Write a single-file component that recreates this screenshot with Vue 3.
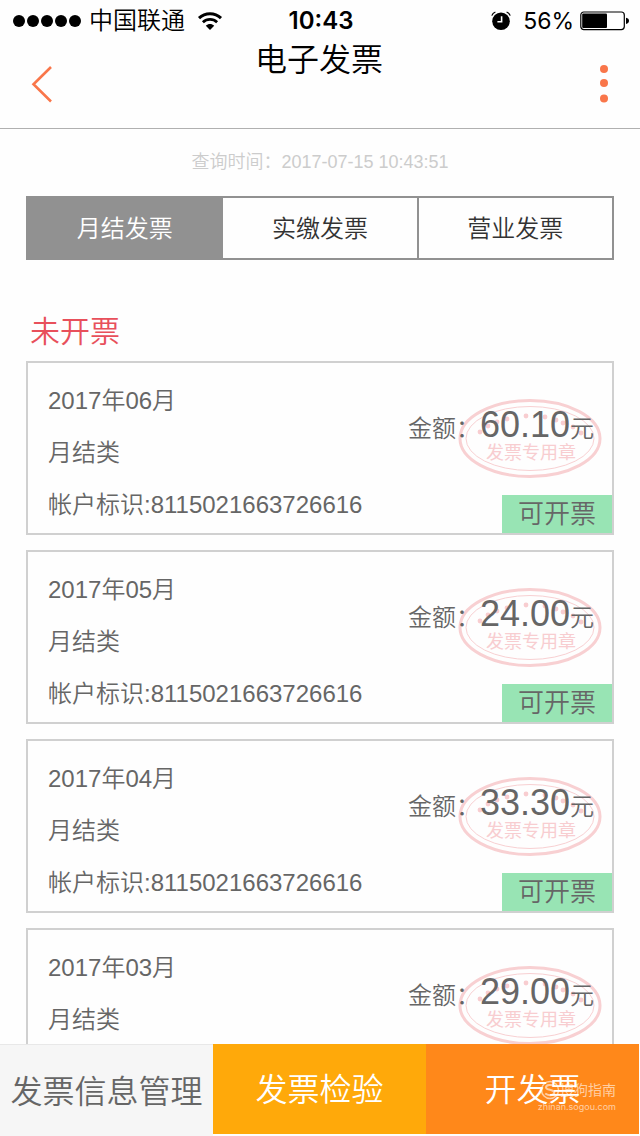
<template>
  <div class="page">
    <div class="status-bar">
      <div class="status-left">
        <div class="signal">
          <i v-for="n in 5" :key="n" class="signal-dot"></i>
        </div>
        <span class="carrier">中国联通</span>
        <svg class="wifi" width="26" height="20" viewBox="0 0 26 20">
          <path d="M2 7.2C8.2 1.3 17.8 1.3 24 7.2" fill="none" stroke="#000" stroke-width="3" />
          <path d="M5.9 11.3C10 7.5 16 7.5 20.1 11.3" fill="none" stroke="#000" stroke-width="2.8" />
          <path d="M13 19L8.8 14.7C11.2 12.5 14.8 12.5 17.2 14.7Z" fill="#000" />
        </svg>
      </div>
      <span class="clock">10:43</span>
      <div class="status-right">
        <svg width="20" height="20" viewBox="0 0 20 20">
          <circle cx="10" cy="10.2" r="8.8" fill="#000" />
          <path d="M0.8 4.6A6 6 0 0 1 4.4 1M19.2 4.6A6 6 0 0 0 15.6 1" fill="none" stroke="#000" stroke-width="1.3" />
          <path d="M10.6 5.2V10.8H6.4" fill="none" stroke="#fff" stroke-width="1.6" />
        </svg>
        <span class="percent">56%</span>
        <svg class="battery" width="49" height="20" viewBox="0 0 49 20">
          <rect x="0.8" y="1" width="43.5" height="17.6" rx="3" fill="#fff" stroke="#000" stroke-width="1.2" />
          <rect x="2.2" y="2.6" width="24.8" height="14.4" rx="1" fill="#000" />
          <path d="M46 6.7Q49 7.3 49 9.8T46 12.9Z" fill="#000" />
        </svg>
      </div>
    </div>

    <header class="header">
      <button class="icon-btn" type="button" aria-label="返回">
        <svg width="24" height="40" viewBox="0 0 24 40">
          <path d="M21 2L3.5 19.2L21 36.5" fill="none" stroke="#f9764a" stroke-width="2.6" />
        </svg>
      </button>
      <h1 class="title">电子发票</h1>
      <button class="icon-btn menu-btn" type="button" aria-label="更多">
        <svg width="8" height="40" viewBox="0 0 8 40">
          <circle cx="4" cy="4" r="4" fill="#f9764a" />
          <circle cx="4" cy="18" r="4" fill="#f9764a" />
          <circle cx="4" cy="33.5" r="4" fill="#f9764a" />
        </svg>
      </button>
    </header>

    <main class="content">
      <p class="query-time">查询时间：2017-07-15 10:43:51</p>

      <div class="tabs">
        <button
          v-for="(tab, index) in tabs"
          :key="tab"
          type="button"
          class="tab"
          :class="{ active: index === activeTab }"
          @click="activeTab = index"
        >
          {{ tab }}
        </button>
      </div>

      <h2 class="section-title">未开票</h2>

      <ul class="invoice-list">
        <li v-for="item in invoices" :key="item.month" class="invoice">
          <div class="info">
            <p>{{ item.month }}</p>
            <p>月结类</p>
            <p>帐户标识:8115021663726616</p>
          </div>
          <div class="side">
            <div class="amount">
              <svg class="stamp" width="144" height="80" viewBox="0 0 144 80">
                <ellipse cx="72" cy="40.5" rx="70" ry="38" fill="none" stroke="#f8d0d2" stroke-width="3" />
                <ellipse cx="72" cy="40.5" rx="64" ry="32" fill="none" stroke="#f8d0d2" stroke-width="1" />
                <circle v-for="(dot, i) in stampDots" :key="i" :cx="dot[0]" :cy="dot[1]" r="2.4" fill="#f8cdd0" />
                <text x="73" y="61" text-anchor="middle" class="stamp-text">发票专用章</text>
              </svg>
              <span class="amount-text">金额：<span class="amount-value">{{ item.amount }}</span>元</span>
            </div>
            <span class="badge">可开票</span>
          </div>
        </li>
      </ul>
    </main>

    <footer class="footer">
      <button type="button" class="action manage">发票信息管理</button>
      <button type="button" class="action check">发票检验</button>
      <button type="button" class="action issue">开发票</button>
      <div class="watermark">
        <div class="watermark-name">
          <svg width="20" height="20" viewBox="0 0 20 20">
            <circle cx="10" cy="10" r="8.5" fill="none" stroke="currentColor" stroke-width="1.5" />
            <path d="M14.5 6.2C12 4.3 6 4.6 6 7.4C6 10.4 14.3 9.2 14.3 12.6C14.3 15.8 8 15.9 5.2 13.6" fill="none" stroke="currentColor" stroke-width="2" />
          </svg>
          <span>搜狗指南</span>
        </div>
        <div class="watermark-url">zhinan.sogou.com</div>
      </div>
    </footer>
  </div>
</template>

<script setup>
import { ref } from 'vue'

const tabs = ['月结发票', '实缴发票', '营业发票']
const activeTab = ref(0)

const invoices = [
  { month: '2017年06月', amount: '60.10' },
  { month: '2017年05月', amount: '24.00' },
  { month: '2017年04月', amount: '33.30' },
  { month: '2017年03月', amount: '29.00' }
]

// 印章上方的一圈圆点
const stampDots = [
  [22, 34],
  [30, 28],
  [39, 24],
  [49, 21],
  [68, 18],
  [87, 19],
  [98, 22],
  [105, 25],
  [115, 29],
  [123, 35]
]
</script>

<style>
body {
  margin: 0;
  background: #fff;
}
</style>

<style scoped>
.page {
  display: flex;
  flex-direction: column;
  height: 100vh;
  overflow: hidden;
  background: #fefefe;
  color: #666;
  font-family: 'Liberation Sans', 'Noto Sans CJK SC', sans-serif;
  font-size: 24px;
  font-weight: 350;
}

p,
h1,
h2,
ul {
  margin: 0;
  padding: 0;
  font-weight: 350;
}

button {
  padding: 0;
  border: none;
  border-radius: 0;
  background: none;
  color: inherit;
  font: inherit;
  cursor: pointer;
}

svg {
  display: block;
}

.status-bar {
  display: grid;
  grid-template-columns: 1fr auto 1fr;
  align-items: center;
  flex: none;
  height: 42px;
  padding: 0 11px 0 13px;
  color: #000;
  font-family: Inter, 'Noto Sans CJK SC', sans-serif;
  line-height: 42px;
}

.status-left,
.status-right {
  display: flex;
  align-items: center;
}

.status-right {
  justify-content: flex-end;
}

.signal {
  display: flex;
  gap: 2px;
  margin-right: 8px;
}

.signal-dot {
  width: 12px;
  height: 12px;
  border-radius: 50%;
  background: #000;
}

.wifi {
  margin-left: 12px;
}

.clock {
  font-weight: 600;
}

.percent {
  margin: 0 6px 0 12px;
  font-size: 23px;
  font-weight: 400;
}

.header {
  display: flex;
  align-items: center;
  justify-content: space-between;
  flex: none;
  height: 86px;
  padding: 0 32px 0 30px;
  border-bottom: 1px solid #b0b0b0;
}

.icon-btn {
  width: 24px;
}

.menu-btn {
  display: flex;
  justify-content: flex-end;
}

.title {
  align-self: flex-start;
  color: #000;
  font-size: 32px;
  line-height: 36px;
}

.content {
  flex: 1;
  min-height: 0;
  overflow: hidden;
  padding: 0 26px;
}

.query-time {
  padding: 21px 0;
  color: #ccc;
  font-size: 18px;
  line-height: 25px;
  text-align: center;
}

.tabs {
  display: flex;
  border: 2px solid #919191;
}

.tab {
  flex: 1;
  height: 60px;
  padding-bottom: 4px;
  color: #333;
}

.tab + .tab {
  border-left: 2px solid #919191;
}

.tab.active {
  background: #919191;
  color: #fff;
}

.section-title {
  padding: 50px 4px 7px;
  color: #e8505b;
  font-size: 30px;
  line-height: 44px;
}

.invoice-list {
  display: flex;
  flex-direction: column;
  gap: 15px;
  list-style: none;
}

.invoice {
  display: flex;
  justify-content: space-between;
  border: 2px solid #d0d0d0;
}

.info {
  padding: 12px 0 2px 20px;
  line-height: 52px;
}

.side {
  display: flex;
  flex-direction: column;
  align-items: flex-end;
  justify-content: space-between;
}

.amount {
  position: relative;
  margin: 36px 18px 0 0;
  line-height: 52px;
}

.amount-text {
  position: relative;
}

.amount-value {
  font-size: 36px;
}

.stamp {
  position: absolute;
  top: -1px;
  right: -8px;
}

.stamp-text {
  fill: #f8cdd0;
  font-size: 18px;
  font-weight: 400;
}

.badge {
  padding: 0 16px;
  background: #98e4b4;
  font-size: 26px;
  line-height: 38px;
}

.footer {
  position: relative;
  display: grid;
  grid-template-columns: repeat(3, 1fr);
  flex: none;
  height: 92px;
  padding-right: 1px;
  font-size: 32px;
}

.action {
  height: 90px;
  padding-bottom: 4px;
  color: #fff;
  white-space: nowrap;
}

.manage {
  height: 92px;
  border-top: 1px solid #e8e8e8;
  background: #f6f6f6;
  color: #666;
}

.check {
  background: #ffa90a;
}

.issue {
  background: #ff881a;
}

.watermark {
  position: absolute;
  right: 24px;
  bottom: 22px;
  color: rgba(255, 255, 255, 0.6);
  font-size: 14px;
  font-weight: 400;
  pointer-events: none;
}

.watermark-name {
  display: flex;
  align-items: center;
  justify-content: flex-end;
  line-height: 20px;
}

.watermark-url {
  font-family: Inter, sans-serif;
  font-size: 9px;
  line-height: 14px;
}
</style>
